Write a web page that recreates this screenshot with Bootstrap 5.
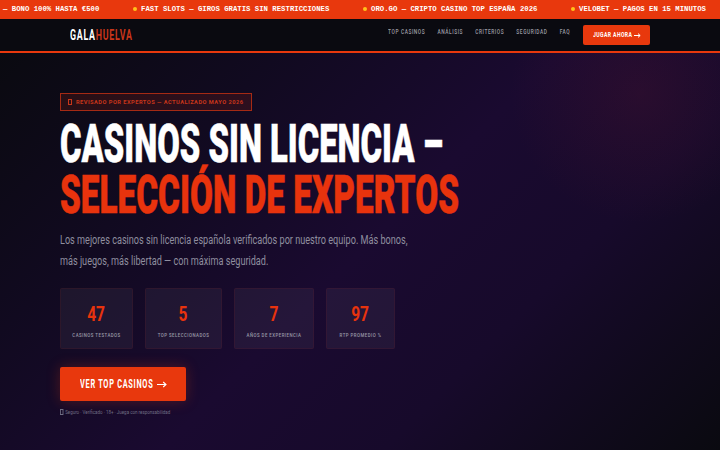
<!DOCTYPE html>
<html lang="es">
<head>
<meta charset="utf-8">
<title>Gala Huelva</title>
<link rel="stylesheet" href="https://cdn.jsdelivr.net/npm/bootstrap@5.3.0/dist/css/bootstrap.min.css">
<style>
html, body { height: 100%; }
body { background: #0a0a10; overflow: hidden; font-family: Roboto, "Liberation Sans", sans-serif; }
.squeeze { display: inline-block; transform-origin: left center; white-space: nowrap; }

.ticker { height: 19px; background: #e8380d; overflow: hidden; white-space: nowrap; font: 700 7.3px/19px "Liberation Mono", monospace; color: #fff; }
.ticker-item { flex: none; }
.ticker-item::before { content: ""; display: inline-block; width: 4px; height: 4px; border-radius: 50%; background: #ffc21a; margin-right: 4px; }
.ticker-item.first { width: 133px; padding-left: 3px; }
.ticker-item.first::before { display: none; }
.ticker-item.second { width: 230px; }
.ticker-item.third { width: 208px; }

.topbar { height: 34px; background: #0a0a10; border-bottom: 2px solid #e8380d; padding: 0 70px; }
.brand { font: 700 14px/1 Roboto, sans-serif; letter-spacing: 1.2px; color: #fff; transform: scaleX(.63); width: 62px; }
.brand span { color: #c8361a; }
.toplinks { transform: scaleX(.758); transform-origin: right center; margin: -6px 13px 0 0; }
.toplink { font: 500 6.4px/1 Roboto, sans-serif; letter-spacing: .75px; color: #9c9ca4; white-space: nowrap; }
.topbtn { background: #e8380d; color: #fff; font: 700 6.4px/20px Roboto, sans-serif; letter-spacing: .5px; width: 67px; height: 20px; padding: 0; border: 0; border-radius: 2px; }
.topbtn .squeeze { width: 41px; transform: scaleX(.8); }
.arrow { flex: none; }

.hero { height: 397px; padding: 40px 0 0 60px; background:
  radial-gradient(circle at 640px 40px, rgba(110,25,50,.2), transparent 130px),
  linear-gradient(135deg, #0a0a10 0%, #110a20 25%, #1a0a30 50%, #170a2b 70%, #0a0a10 100%); }
.review { display: block; height: 18px; width: 192px; background: rgba(232,56,13,.13); border: 1px solid #a52a14; font: 700 5.7px/16px Roboto, sans-serif; letter-spacing: .47px; color: #c8361a; padding-left: 7px; white-space: nowrap; }
.tofu { display: inline-block; width: 4px; height: 6px; border: 1px solid currentColor; margin-right: 2px; vertical-align: -1px; }
.review .tofu { margin-right: 4px; }

.headline { margin: 8px 0 0; font: 900 53px/51px Roboto, sans-serif; color: #fff; -webkit-text-stroke: .5px currentColor; }
.headline .squeeze { display: block; transform: scaleX(.618); }
.headline .hot { color: #e8330d; transform: scaleX(.629); }
.intro { margin: 8px 0 0; font: 400 12.5px/21px Roboto, sans-serif; color: #8f8e9f; }
.intro .squeeze { display: block; transform: scaleX(.73); }

.stats { display: grid; grid-template-columns: 73px 77px 80px 69px; gap: 12px; margin-top: 17px; }
.stat { height: 61px; background: rgba(255,255,255,.05); border: 1px solid rgba(232,56,13,.08); border-radius: 2px; text-align: center; padding-top: 14px; }
.stat b { display: inline-block; font: 700 21px/22px Roboto, sans-serif; color: #e8330d; transform: scaleX(.74); }
.stat small { display: block; margin-top: 3px; font: 500 5.2px/8px Roboto, sans-serif; letter-spacing: .55px; color: #9a9aa8; white-space: nowrap; transform: scaleX(.84); }

.cta { width: 126px; height: 34px; margin-top: 18px; padding: 0 0 0 20px; background: #e8380d; color: #fff; border: 0; border-radius: 2px; font: 700 12.5px/34px Roboto, sans-serif; letter-spacing: 1.2px; box-shadow: 0 0 14px rgba(232,56,13,.28); }
.cta .squeeze { width: 77px; transform: scaleX(.59); }
.note { margin-top: 7px; font: 400 5.2px/8px Roboto, sans-serif; color: #6f6e84; white-space: nowrap; transform: scaleX(.86); transform-origin: left center; }
</style>
</head>
<body>
<div class="ticker d-flex">
  <div class="ticker-item first">— BONO 100% HASTA €500</div>
  <div class="ticker-item second">FAST SLOTS — GIROS GRATIS SIN RESTRICCIONES</div>
  <div class="ticker-item third">ORO.GO — CRIPTO CASINO TOP ESPAÑA 2026</div>
  <div class="ticker-item">VELOBET — PAGOS EN 15 MINUTOS</div>
</div>
<nav class="topbar d-flex align-items-center justify-content-between">
  <a class="brand squeeze text-decoration-none" href="#">GALA<span>HUELVA</span></a>
  <div class="d-flex align-items-center">
    <div class="toplinks d-flex gap-3">
      <a class="toplink text-decoration-none" href="#">TOP CASINOS</a>
      <a class="toplink text-decoration-none" href="#">ANÁLISIS</a>
      <a class="toplink text-decoration-none" href="#">CRITERIOS</a>
      <a class="toplink text-decoration-none" href="#">SEGURIDAD</a>
      <a class="toplink text-decoration-none" href="#">FAQ</a>
    </div>
    <button class="btn topbtn d-flex align-items-center justify-content-center" type="button">
      <span class="squeeze">JUGAR AHORA</span>
      <svg class="arrow" width="7" height="5" viewBox="0 0 7 5"><path d="M0 2.5H6M4 .6 6.2 2.5 4 4.4" fill="none" stroke="#fff" stroke-width="1"/></svg>
    </button>
  </div>
</nav>
<main class="hero">
  <div class="review"><span class="tofu"></span>REVISADO POR EXPERTOS — ACTUALIZADO MAYO 2026</div>
  <h1 class="headline">
    <span class="squeeze">CASINOS SIN LICENCIA –</span>
    <span class="squeeze hot">SELECCIÓN DE EXPERTOS</span>
  </h1>
  <p class="intro">
    <span class="squeeze">Los mejores casinos sin licencia española verificados por nuestro equipo. Más bonos,</span>
    <span class="squeeze">más juegos, más libertad — con máxima seguridad.</span>
  </p>
  <div class="stats">
    <div class="stat"><b>47</b><small>CASINOS TESTADOS</small></div>
    <div class="stat"><b>5</b><small>TOP SELECCIONADOS</small></div>
    <div class="stat"><b>7</b><small>AÑOS DE EXPERIENCIA</small></div>
    <div class="stat"><b>97</b><small>RTP PROMEDIO %</small></div>
  </div>
  <button class="btn cta d-flex align-items-center" type="button">
    <span class="squeeze">VER TOP CASINOS</span>
    <svg class="arrow" width="10" height="7" viewBox="0 0 10 7"><path d="M0 3.5H9M6.2 1 9 3.5 6.2 6" fill="none" stroke="#fff" stroke-width="1.1"/></svg>
  </button>
  <div class="note"><span class="tofu"></span>Seguro · Verificado · 18+ · Juega con responsabilidad</div>
</main>
<script src="https://cdn.jsdelivr.net/npm/bootstrap@5.3.0/dist/js/bootstrap.bundle.min.js"></script>
</body>
</html>
